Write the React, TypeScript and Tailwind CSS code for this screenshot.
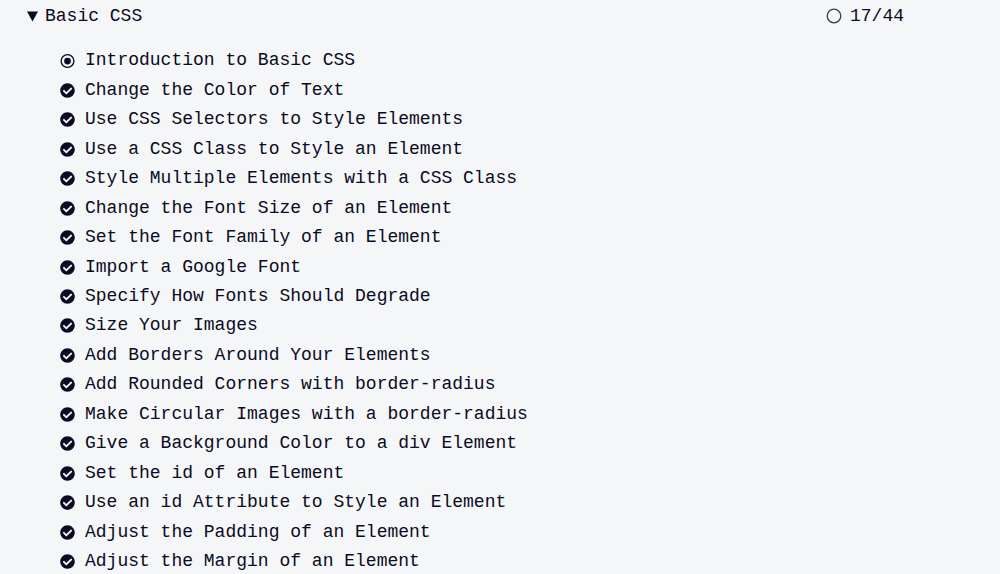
import { FaCheckCircle } from "react-icons/fa";

const lessons = [
  "Introduction to Basic CSS",
  "Change the Color of Text",
  "Use CSS Selectors to Style Elements",
  "Use a CSS Class to Style an Element",
  "Style Multiple Elements with a CSS Class",
  "Change the Font Size of an Element",
  "Set the Font Family of an Element",
  "Import a Google Font",
  "Specify How Fonts Should Degrade",
  "Size Your Images",
  "Add Borders Around Your Elements",
  "Add Rounded Corners with border-radius",
  "Make Circular Images with a border-radius",
  "Give a Background Color to a div Element",
  "Set the id of an Element",
  "Use an id Attribute to Style an Element",
  "Adjust the Padding of an Element",
  "Adjust the Margin of an Element",
];

function RadioIcon() {
  return (
    <svg width="16" height="16" viewBox="0 0 16 16">
      <circle cx="8" cy="8" r="6.8" fill="none" stroke="#0a0a23" strokeWidth="1.4" />
      <circle cx="8" cy="8" r="3.6" fill="#0a0a23" />
    </svg>
  );
}

export default function App() {
  return (
    <div
      className="min-h-[574px] w-[1000px] overflow-hidden bg-[#f5f6f7] text-[#0a0a23] text-[18px]"
      style={{ fontFamily: '"Liberation Mono", "DejaVu Sans Mono", monospace' }}
    >
      <div className="flex h-[31px] items-center justify-between pl-[27px] pr-[96px] pt-[1px]">
        <div className="flex items-center gap-[7px]">
          <svg width="11" height="11" viewBox="0 0 11 11">
            <polygon points="0,0.5 11,0.5 5.5,10.5" fill="#0a0a23" />
          </svg>
          <span>Basic CSS</span>
        </div>
        <div className="flex items-center gap-[8px]">
          <svg width="16" height="16" viewBox="0 0 16 16">
            <circle cx="8" cy="8" r="6.8" fill="none" stroke="#3b3b4f" strokeWidth="1.3" />
          </svg>
          <span>17/44</span>
        </div>
      </div>
      <ul className="pl-[60px] pt-[15px]">
        {lessons.map((lesson, i) => (
          <li key={lesson} className="flex h-[29.47px] items-center gap-[10px]">
            <span className="flex w-[15px] justify-center">
              {i === 0 ? <RadioIcon /> : <FaCheckCircle size={15} color="#0a0a23" />}
            </span>
            <span className="whitespace-nowrap">{lesson}</span>
          </li>
        ))}
      </ul>
    </div>
  );
}
